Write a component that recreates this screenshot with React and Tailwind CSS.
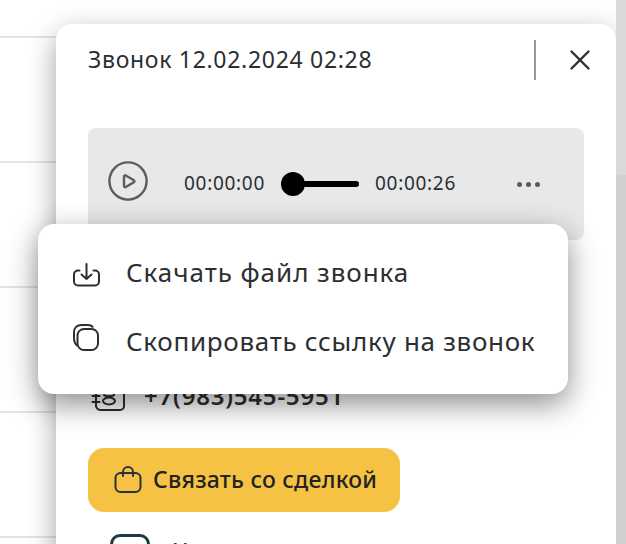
import React from "react";

const font = { fontFamily: '"Noto Sans", sans-serif' };

function PlayIcon() {
  return (
    <svg className="mb-[6px]" width="40" height="40" viewBox="0 0 40 40" fill="none" stroke="#5c5c5c" strokeWidth="2.400" strokeLinejoin="round">
      <circle cx="20" cy="20" r="18.600" />
      <path d="M16 15.500v9.500c0 1 1 1.500 1.800 1l8-4.800c.8-.5.8-1.500 0-2l-8-4.700c-.8-.5-1.800 0-1.800 1z" />
    </svg>
  );
}

function DownloadIcon() {
  return (
    <svg width="28" height="28" viewBox="0 0 28 28" fill="none" stroke="#2b2f33" strokeWidth="2" strokeLinecap="round" strokeLinejoin="round">
      <path d="M7.500 10.500H6a4 4 0 0 0-4 4v7a4 4 0 0 0 4 4h17a4 4 0 0 0 4-4v-7a4 4 0 0 0-4-4h-1.500" />
      <path d="M14.500 4v15M9.500 14.500l5 4.500 5-4.500" />
    </svg>
  );
}

function CopyIcon() {
  return (
    <svg className="mb-[10px]" width="28" height="28" viewBox="0 0 28 28" fill="none" stroke="#2b2f33" strokeWidth="2">
      <rect x="5.500" y="5" width="20.500" height="21" rx="6.500" />
      <path d="M21 3.500C20 1.500 18 1 16 1h-6.500C5 1 2 4 2 8.500V14c0 3.500 1 6 3.500 8" />
    </svg>
  );
}

function BagIcon() {
  return (
    <svg width="28" height="28" viewBox="0 0 28 28" fill="none" stroke="#26323a" strokeWidth="2" strokeLinecap="round" strokeLinejoin="round">
      <rect x="1.500" y="7" width="25" height="19" rx="5" />
      <path d="M9 10V6a5 5 0 0 1 10 0v4" />
    </svg>
  );
}

function PhoneIcon() {
  return (
    <svg width="34" height="34" viewBox="0 0 34 34" fill="none" stroke="#2b2f33" strokeWidth="2" strokeLinecap="round" strokeLinejoin="round">
      <path d="M33 4v22a4 4 0 0 1-4 4H10a5 5 0 0 1-5-4" />
      <path d="M1.500 16h7M1.500 22h7M5 10v16" />
      <ellipse cx="18" cy="21" rx="6" ry="3.500" />
      <path d="M13 15c1 1.500 9 1.500 10 0V10" />
    </svg>
  );
}

export default function App() {
  return (
    <div className="flex h-[544px] w-[626px] overflow-hidden bg-white" style={font}>
      {/* таблица за модалкой */}
      <div className="w-[56px] shrink-0 pt-[36px]">
        <div className="h-[125px] border-t-2 border-[#e4e4e4]" />
        <div className="h-[125px] border-t-2 border-[#e4e4e4]" />
        <div className="h-[125px] border-t-2 border-[#e4e4e4]" />
        <div className="h-[125px] border-t-2 border-[#e4e4e4]" />
        <div className="h-[125px] border-t-2 border-[#e4e4e4]" />
      </div>

      <div className="relative mt-[24px] h-[700px] w-[560px] shrink-0 rounded-t-[16px] bg-white px-[32px] shadow-[0_10px_28px_rgba(0,0,0,0.38)]">
        <div className="flex h-[72px] items-center text-[#2b2f33]">
          <span className="mb-[2px] grow text-[23px] tracking-[0.7px]">Звонок 12.02.2024 02:28</span>
          <div className="h-[40px] w-[2px] bg-[#9a9a9a]" />
          <svg className="ml-[32px] mr-[-8px]" width="24" height="24" viewBox="0 0 24 24" fill="none" stroke="#2b2f33" strokeWidth="2.400" strokeLinecap="round">
            <path d="M3.500 3.500l17 17M20.500 3.500l-17 17" />
          </svg>
        </div>

        <div className="mt-[32px] flex h-[112px] items-center rounded-[8px] bg-[#e8e8e8] pl-[20px] pr-[44px] text-[#2b2f33]">
          <PlayIcon />
          <span className="mb-[2px] ml-[36px] text-[19px] tracking-[0.7px]">00:00:00</span>
          <div className="ml-[16px] flex items-center">
            <div className="h-[24px] w-[24px] rounded-full bg-black" />
            <div className="ml-[-2px] h-[6px] w-[56px] rounded-full bg-black" />
          </div>
          <span className="mb-[2px] ml-[16px] text-[19px] tracking-[0.7px]">00:00:26</span>
          <div className="ml-auto flex gap-[4px]">
            <div className="h-[5px] w-[5px] rounded-full bg-[#5c5c5c]" />
            <div className="h-[5px] w-[5px] rounded-full bg-[#5c5c5c]" />
            <div className="h-[5px] w-[5px] rounded-full bg-[#5c5c5c]" />
          </div>
        </div>

        <div className="ml-[3px] mt-[137px] flex h-[40px] items-center gap-[19px] text-[24px] font-semibold tracking-[0.8px] text-[#2b2f33]">
          <PhoneIcon />
          <span className="mb-[3px]">+7(983)545-5951</span>
        </div>

        <button className="mt-[31px] flex h-[64px] w-[312px] items-center gap-[11px] rounded-[16px] bg-[#f6c244] pl-[26px] text-[23px] font-medium tracking-[0.25px] text-[#222]">
          <BagIcon />
          <span className="mb-[2px]">Связать со сделкой</span>
        </button>

        <div className="ml-[22px] mt-[22px] flex items-start gap-[22px]">
          <div className="h-[40px] w-[40px] shrink-0 rounded-[10px] border-[3px] border-[#1d3a3f]" />
          <span className="text-[22px] font-medium text-[#2b2f33]">Новая сделка</span>
        </div>

        {/* меню плеера */}
        <div className="absolute left-[-18px] top-[200px] w-[530px] rounded-[16px] bg-white pb-[17px] pt-[15px] text-[26px] tracking-[0.7px] text-[#2b2f33] shadow-[0_10px_30px_rgba(0,0,0,0.45)]">
          <div className="flex h-[69px] items-center gap-[26px] pl-[34px]">
            <DownloadIcon />
            <span className="mb-[2px] tracking-[0.95px]">Скачать файл звонка</span>
          </div>
          <div className="flex h-[69px] items-center gap-[26px] pl-[34px]">
            <CopyIcon />
            <span className="mb-[2px]">Скопировать ссылку на звонок</span>
          </div>
        </div>
      </div>

      {/* скроллбар */}
      <div className="relative w-[10px] shrink-0 bg-[#cfcfcf]">
        <div className="h-[175px] rounded-bl-[4px] bg-[#d9d9d9]" />
      </div>
    </div>
  );
}
